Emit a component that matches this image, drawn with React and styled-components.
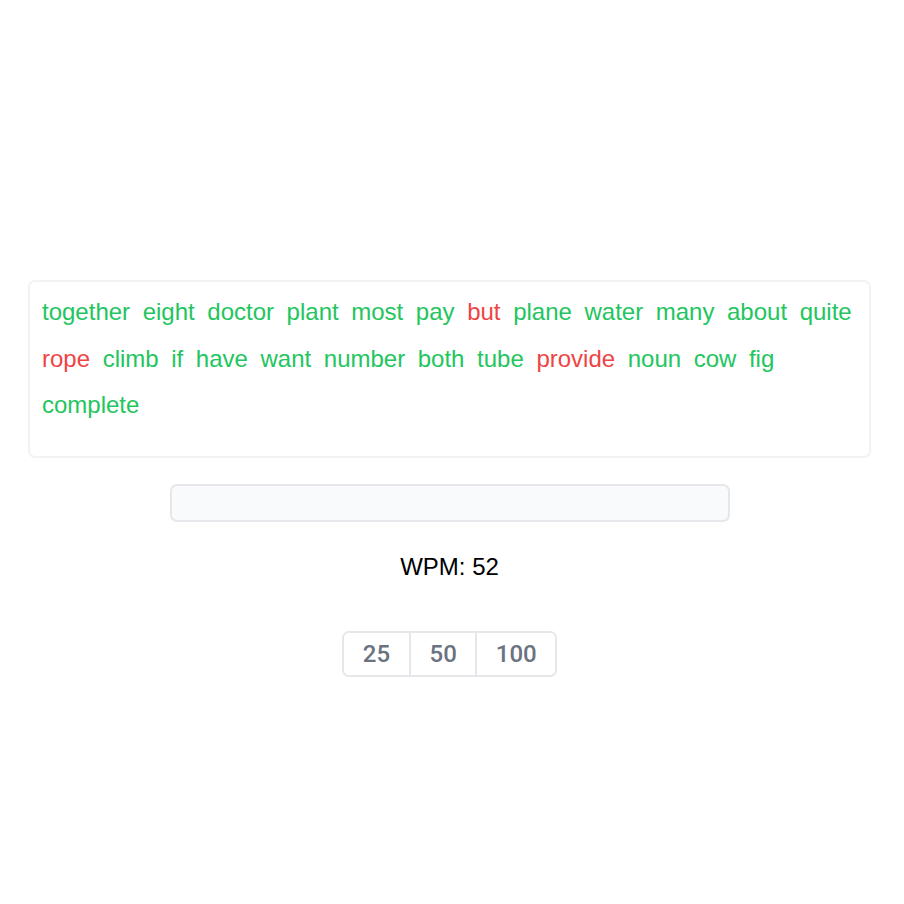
import React from "react";
import styled, { createGlobalStyle } from "styled-components";

const Global = createGlobalStyle`
  * { box-sizing: border-box; }
  html, body { margin: 0; padding: 0; background: #ffffff; }
  body { font-family: "Liberation Sans", Arial, Helvetica, sans-serif; }
`;

const Page = styled.div`
  width: 904px;
  height: 904px;
  display: flex;
  flex-direction: column;
  align-items: center;
  padding-top: 280px;
  padding-right: 5px;
`;

const WordBox = styled.div`
  width: 843px;
  min-height: 178px;
  border: 2px solid #f1f2f4;
  border-radius: 7px;
  padding: 12px 12px;
  display: flex;
  flex-wrap: wrap;
  align-content: flex-start;
  column-gap: 12.6px;
  row-gap: 10.5px;
  font-size: 24px;
  line-height: 36px;
`;

const Word = styled.span`
  color: ${(p) => (p.$wrong ? "#ef4444" : "#22c55e")};
`;

const TypeInput = styled.input`
  margin-top: 26px;
  width: 560px;
  height: 38px;
  border: 2px solid #e5e7eb;
  border-radius: 7px;
  background: #f9fafb;
  outline: none;
  font-size: 20px;
  padding: 0 10px;
  font-family: inherit;
`;

const Stats = styled.div`
  margin-top: 27px;
  font-size: 24px;
  line-height: 36px;
  color: #000;
`;

const Group = styled.div`
  margin-top: 46px;
  display: flex;
  border: 2px solid #e5e7eb;
  border-radius: 7px;
  overflow: hidden;
`;

const CountButton = styled.button`
  border: none;
  border-left: ${(p) => (p.$first ? "none" : "2px solid #e5e7eb")};
  background: #ffffff;
  color: #6b7280;
  font-family: Roboto, "Liberation Sans", Arial, sans-serif;
  font-size: 24px;
  font-weight: 500;
  line-height: 42px;
  padding: 0 ${(p) => (p.$first ? 19 : 18.5)}px;
  cursor: pointer;
`;

const words = [
  ["together"], ["eight"], ["doctor"], ["plant"], ["most"], ["pay"], ["but", 1],
  ["plane"], ["water"], ["many"], ["about"], ["quite"], ["rope", 1], ["climb"],
  ["if"], ["have"], ["want"], ["number"], ["both"], ["tube"], ["provide", 1],
  ["noun"], ["cow"], ["fig"], ["complete"],
];

export default function App() {
  return (
    <>
      <Global />
      <Page>
        <WordBox>
          {words.map(([w, bad], i) => (
            <Word key={i} $wrong={!!bad}>{w}</Word>
          ))}
        </WordBox>
        <TypeInput type="text" />
        <Stats>WPM: 52</Stats>
        <Group>
          <CountButton $first>25</CountButton>
          <CountButton>50</CountButton>
          <CountButton>100</CountButton>
        </Group>
      </Page>
    </>
  );
}
